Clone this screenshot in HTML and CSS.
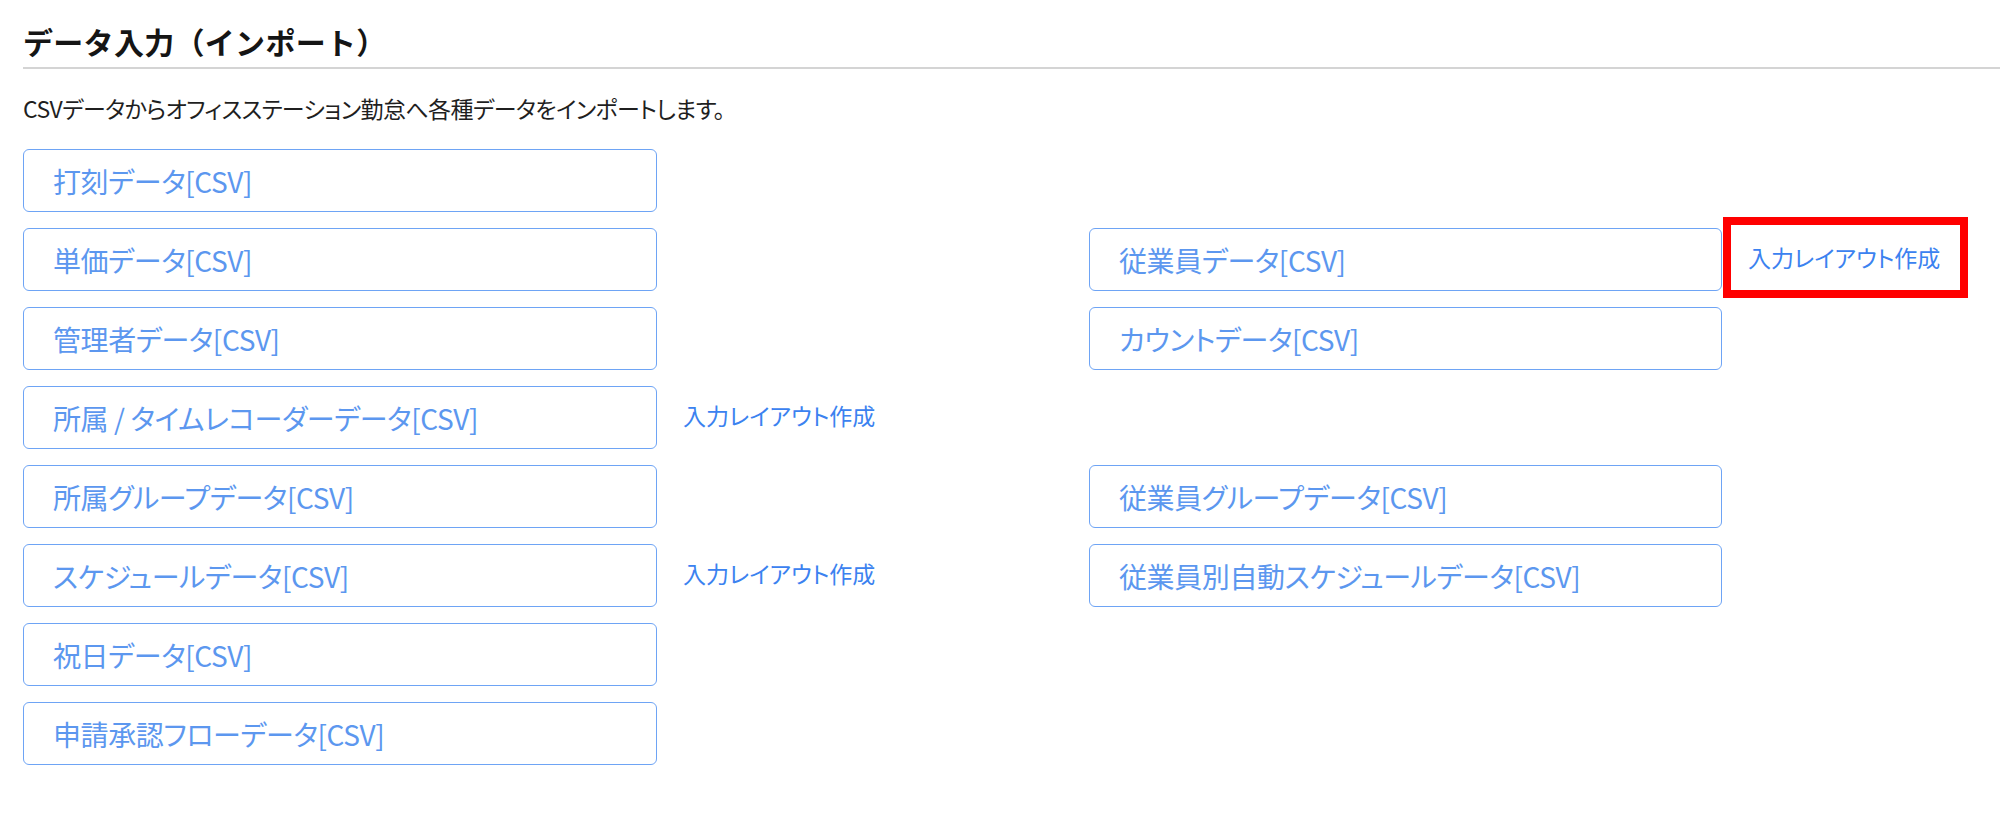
FILE: index.html
```html
<!DOCTYPE html>
<html lang="ja">
<head>
<meta charset="utf-8">
<title>データ入力（インポート）</title>
<link rel="stylesheet" href="styles.css">
</head>
<body>
<div class="page">
  <h1 class="title">データ入力（インポート）</h1>
  <p class="desc">CSVデータからオフィスステーション勤怠へ各種データをインポートします。</p>
  <div class="grid">
    <a class="btn">打刻データ[CSV]</a>
    <div class="empty"></div>
    <div class="empty"></div>
    <div class="empty"></div>

    <a class="btn">単価データ[CSV]</a>
    <div class="empty"></div>
    <a class="btn">従業員データ[CSV]</a>
    <div class="layout highlight"><a class="link">入力レイアウト作成</a></div>

    <a class="btn">管理者データ[CSV]</a>
    <div class="empty"></div>
    <a class="btn">カウントデータ[CSV]</a>
    <div class="empty"></div>

    <a class="btn">所属 / タイムレコーダーデータ[CSV]</a>
    <div class="layout"><a class="link">入力レイアウト作成</a></div>
    <div class="empty"></div>
    <div class="empty"></div>

    <a class="btn">所属グループデータ[CSV]</a>
    <div class="empty"></div>
    <a class="btn">従業員グループデータ[CSV]</a>
    <div class="empty"></div>

    <a class="btn">スケジュールデータ[CSV]</a>
    <div class="layout"><a class="link">入力レイアウト作成</a></div>
    <a class="btn">従業員別自動スケジュールデータ[CSV]</a>
    <div class="empty"></div>

    <a class="btn">祝日データ[CSV]</a>
    <div class="empty"></div>
    <div class="empty"></div>
    <div class="empty"></div>

    <a class="btn">申請承認フローデータ[CSV]</a>
    <div class="empty"></div>
    <div class="empty"></div>
    <div class="empty"></div>
  </div>
</div>
</body>
</html>
```

FILE: styles.css
```css
html, body {
  margin: 0;
  padding: 0;
  background: #ffffff;
}

body {
  font-family: "Noto Sans CJK JP", "Noto Sans", sans-serif;
  font-feature-settings: "palt";
  color: #1f1f1f;
}

.page {
  padding: 20px 0 0 23px;
}

.title {
  margin: 0;
  font-size: 30px;
  font-weight: 700;
  line-height: 42px;
  letter-spacing: 0.3px;
  color: #151515;
  padding-bottom: 5px;
  border-bottom: 2px solid #d4d4d4;
  font-feature-settings: normal;
}

.desc {
  margin: 22px 0 0 0;
  font-size: 23px;
  line-height: 34px;
  letter-spacing: -0.6px;
  color: #1f1f1f;
}

.grid {
  margin-top: 24px;
  display: grid;
  grid-template-columns: 634px 432px 633px 1fr;
  grid-auto-rows: 63px;
  row-gap: 16px;
}

.btn {
  display: flex;
  align-items: center;
  box-sizing: border-box;
  padding: 1px 0 0 29px;
  border: 1px solid #6ea4f5;
  border-radius: 6px;
  font-size: 28px;
  letter-spacing: -0.4px;
  color: #5c97ef;
  text-decoration: none;
  white-space: nowrap;
}

.layout {
  display: flex;
  align-items: center;
  padding: 0 0 5px 26px;
  position: relative;
}

.link {
  font-size: 23px;
  color: #3b82f0;
  text-decoration: none;
  white-space: nowrap;
}

.highlight::after {
  content: "";
  position: absolute;
  left: 1px;
  top: -11px;
  width: 245px;
  height: 81px;
  box-sizing: border-box;
  border: 8px solid #ff0000;
}
```
